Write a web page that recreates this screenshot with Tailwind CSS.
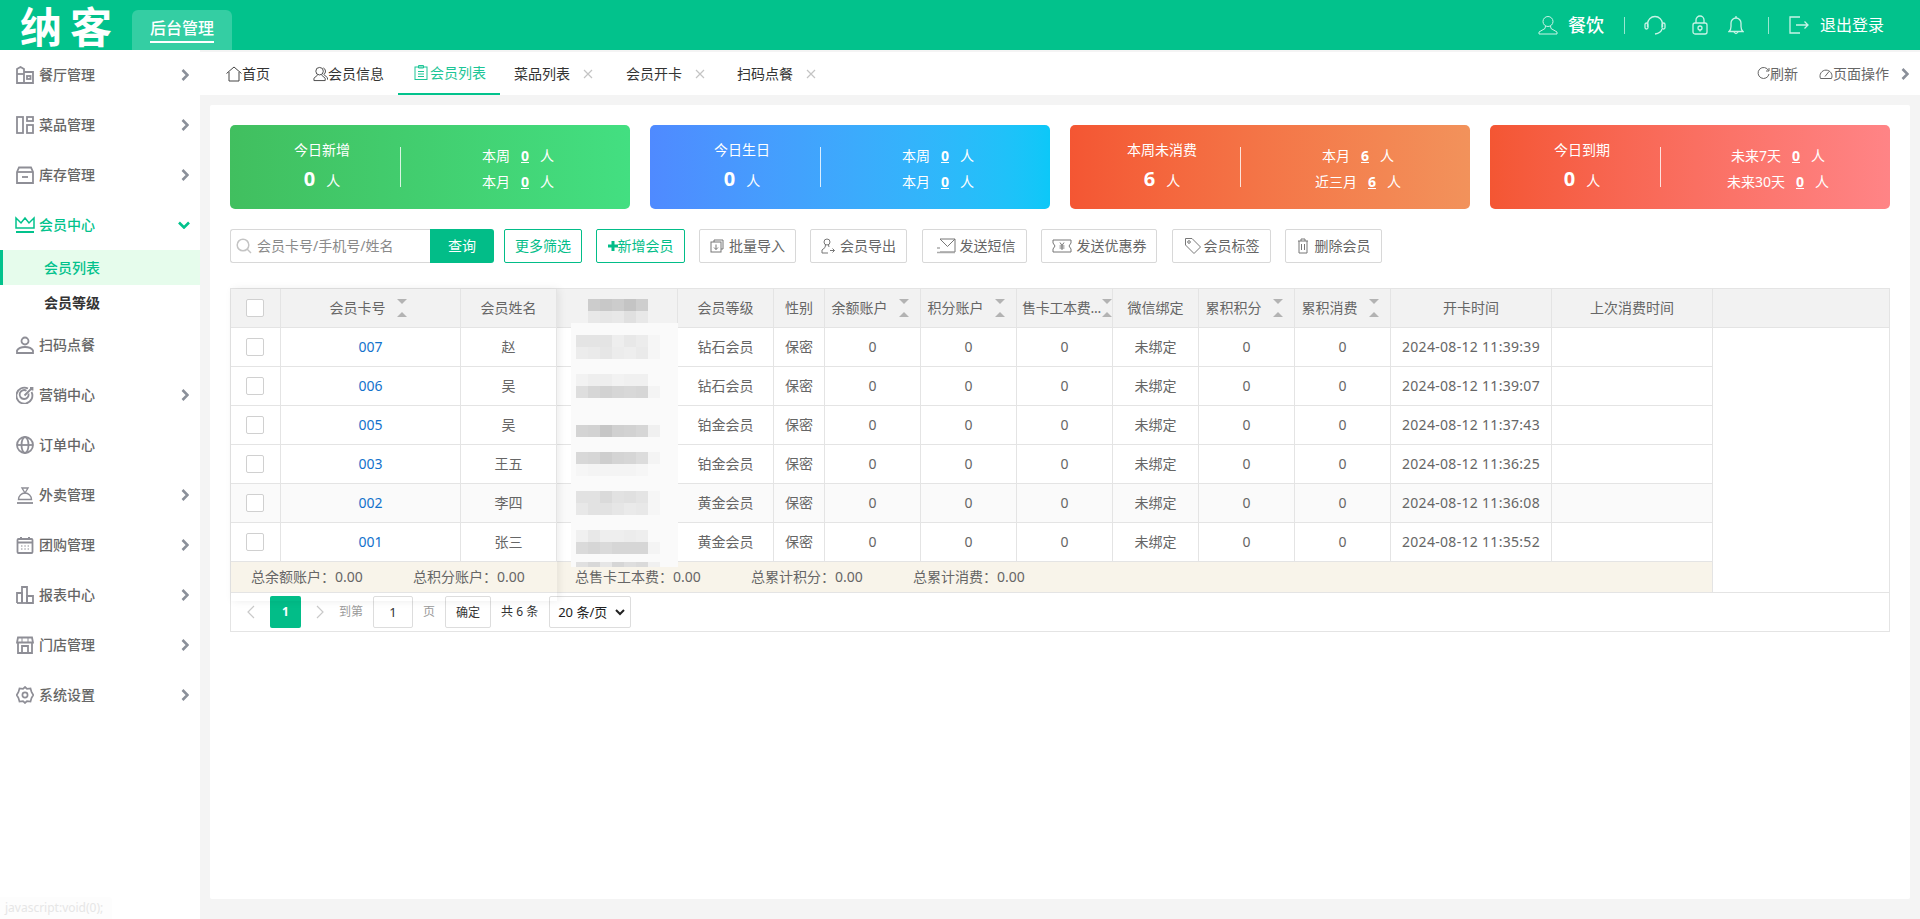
<!DOCTYPE html>
<html lang="en">
<head>
    <meta charset="UTF-8">
    <title>会员列表</title>
    <script src="https://cdn.jsdelivr.net/npm/@tailwindcss/browser@4"></script>
</head>
<body class="h-[919px] overflow-hidden bg-[#f4f4f4] text-[14px] leading-none text-[#666] [font-family:'Noto_Sans','Noto_Sans_CJK_SC',sans-serif]">

    <!-- Header -->
    <header class="h-[50px] bg-[#02c28c] flex items-end text-white">
        <div class="w-[132px] h-[50px] pl-[20px] flex items-center text-[42px] font-bold tracking-[8px] [font-family:'Noto_Sans_CJK_SC',sans-serif]">纳客</div>
        <div class="w-[100px] h-[40px] bg-white/20 rounded-t-[6px] flex justify-center">
            <span class="mt-[10px] h-[23px] border-b-2 border-white text-[16px] font-medium">后台管理</span>
        </div>
        <div class="ml-auto h-[50px] flex items-center pr-[36px]">
            <svg class="w-[20px] h-[20px] mr-[10px]" viewBox="0 0 20 20" fill="none" stroke="#c8f3e6" stroke-width="1"><circle cx="10" cy="6.5" r="5"/><path d="M7.5 11 L7 13.5 L1 17 V19 H19 V17 L13 13.5 L12.5 11"/></svg>
            <span class="text-[18px] font-medium">餐饮</span>
            <span class="w-px h-[17px] bg-white/60 ml-[20px] mr-[19px]"></span>
            <svg class="w-[22px] h-[20px] mr-[26px]" viewBox="0 0 22 20" fill="none" stroke="#c8f3e6" stroke-width="1.3"><path d="M3.5 12 V9 a7.5 7.5 0 0 1 15 0 V12"/><rect x="1" y="8" width="3" height="6" rx="1.5"/><rect x="18" y="8" width="3" height="6" rx="1.5"/><path d="M18 14 q-1 4 -7 5"/></svg>
            <svg class="w-[16px] h-[20px] mr-[20px]" viewBox="0 0 16 20" fill="none" stroke="#c8f3e6" stroke-width="1.3"><rect x="1" y="8" width="14" height="11" rx="2"/><path d="M4 8 V5 a4 4 0 0 1 8 0 V8"/><circle cx="8" cy="13" r="2"/><path d="M8 15 v1.5"/></svg>
            <svg class="w-[16px] h-[20px]" viewBox="0 0 16 20" fill="none" stroke="#c8f3e6" stroke-width="1.3"><path d="M1 16.5 q2 -1.5 2 -5 V8 a5 5 0 0 1 10 0 v3.5 q0 3.5 2 5 Z"/><path d="M8 3 V1"/><path d="M6 17 q2 3 4 0"/></svg>
            <span class="w-px h-[17px] bg-white/60 ml-[24px] mr-[20px]"></span>
            <svg class="w-[20px] h-[18px] mr-[11px]" viewBox="0 0 20 18" fill="none" stroke="#c8f3e6" stroke-width="1.3"><path d="M11 1 H1 V17 H11"/><path d="M7 9 H19 M15.5 5.5 L19 9 L15.5 12.5"/></svg>
            <span class="text-[16px]">退出登录</span>
        </div>
    </header>

    <div class="flex h-[869px]">
        <!-- Sidebar -->
        <aside id="sidebar" class="w-[200px] shrink-0 bg-white relative">
            <nav class="font-medium">
                <a class="h-[50px] flex items-center pl-[16px]"><svg class="w-[18px] h-[18px] mr-[5px]" viewBox="0 0 18 18" fill="none" stroke="#8e8e96" stroke-width="1.8"><path d="M1 17 V3 L4.5 1 L8 3 V17 Z"/><path d="M8 6 H17 V17 H8"/><path d="M1 8 H8"/><rect x="11" y="10" width="3.5" height="3"/></svg>餐厅管理<svg class="w-[8px] h-[12px] ml-auto mr-[11px]" viewBox="0 0 8 12" fill="none" stroke="#8a8f99" stroke-width="2.6"><path d="M1.5 1 L6.5 6 L1.5 11"/></svg></a>
                <a class="h-[50px] flex items-center pl-[16px]"><svg class="w-[18px] h-[18px] mr-[5px]" viewBox="0 0 18 18" fill="none" stroke="#8e8e96" stroke-width="1.8"><rect x="1" y="1" width="6" height="16"/><rect x="11" y="1" width="6" height="4"/><rect x="11" y="9" width="6" height="8"/></svg>菜品管理<svg class="w-[8px] h-[12px] ml-auto mr-[11px]" viewBox="0 0 8 12" fill="none" stroke="#8a8f99" stroke-width="2.6"><path d="M1.5 1 L6.5 6 L1.5 11"/></svg></a>
                <a class="h-[50px] flex items-center pl-[16px]"><svg class="w-[18px] h-[18px] mr-[5px]" viewBox="0 0 18 18" fill="none" stroke="#8e8e96" stroke-width="1.8"><path d="M1 6 L3 1.5 H15 L17 6 V17 H1 Z"/><path d="M1 6 H17"/><path d="M6 11 H12"/></svg>库存管理<svg class="w-[8px] h-[12px] ml-auto mr-[11px]" viewBox="0 0 8 12" fill="none" stroke="#8a8f99" stroke-width="2.6"><path d="M1.5 1 L6.5 6 L1.5 11"/></svg></a>
                <a class="h-[50px] flex items-center pl-[15px] text-[#02c28c]"><svg class="w-[20px] h-[18px] mr-[4px]" viewBox="0 0 20 18" fill="none" stroke="#02c28c" stroke-width="1.5"><path d="M1 12 V2 L6 7 L10 2 L14 7 L19 2 V12 Z"/><path d="M1 16 H19" stroke-width="2"/></svg>会员中心<svg class="w-[12px] h-[8px] ml-auto mr-[10px]" viewBox="0 0 12 8" fill="none" stroke="#02c28c" stroke-width="2.6"><path d="M1 1.5 L6 6.5 L11 1.5"/></svg></a>
                <a class="h-[35px] flex items-center pl-[41px] border-l-[3px] border-[#02c28c] bg-[#e6fcec] text-[#02c28c]">会员列表</a>
                <a class="h-[35px] flex items-center pl-[44px] text-[#333] font-bold">会员等级</a>
                <a class="h-[50px] flex items-center pl-[16px]"><svg class="w-[18px] h-[18px] mr-[5px]" viewBox="0 0 18 18" fill="none" stroke="#8e8e96" stroke-width="1.8"><circle cx="9" cy="5" r="3.5"/><path d="M1 17 V14.5 Q3 11 9 11 Q15 11 17 14.5 V17 Z"/></svg>扫码点餐</a>
                <a class="h-[50px] flex items-center pl-[16px]"><svg class="w-[18px] h-[18px] mr-[5px]" viewBox="0 0 18 18" fill="none" stroke="#8e8e96" stroke-width="1.8"><path d="M15.5 6 A8 8 0 1 1 12 2.5"/><path d="M12.5 7.5 A4.5 4.5 0 1 1 10.5 4.7"/><path d="M8.5 9.5 L16 2 M14 2 H16.5 V4.5"/></svg>营销中心<svg class="w-[8px] h-[12px] ml-auto mr-[11px]" viewBox="0 0 8 12" fill="none" stroke="#8a8f99" stroke-width="2.6"><path d="M1.5 1 L6.5 6 L1.5 11"/></svg></a>
                <a class="h-[50px] flex items-center pl-[16px]"><svg class="w-[18px] h-[18px] mr-[5px]" viewBox="0 0 18 18" fill="none" stroke="#8e8e96" stroke-width="1.8"><circle cx="9" cy="9" r="8"/><ellipse cx="9" cy="9" rx="3.5" ry="8"/><path d="M1 9 H17"/></svg>订单中心</a>
                <a class="h-[50px] flex items-center pl-[16px]"><svg class="w-[18px] h-[18px] mr-[5px]" viewBox="0 0 18 18" fill="none" stroke="#8e8e96" stroke-width="1.4"><path d="M2.5 13.5 A6.5 6.5 0 0 1 15.5 13.5 Z"/><path d="M6 2 H12 L9 7 Z"/><path d="M1 17 H17" stroke-width="1.8"/></svg>外卖管理<svg class="w-[8px] h-[12px] ml-auto mr-[11px]" viewBox="0 0 8 12" fill="none" stroke="#8a8f99" stroke-width="2.6"><path d="M1.5 1 L6.5 6 L1.5 11"/></svg></a>
                <a class="h-[50px] flex items-center pl-[16px]"><svg class="w-[18px] h-[18px] mr-[5px]" viewBox="0 0 18 18" fill="none" stroke="#8e8e96" stroke-width="1.8"><rect x="1.5" y="3" width="15" height="14" rx="1"/><path d="M1.5 6.5 H16.5" stroke-width="2"/><path d="M5 1 V4 M13 1 V4" stroke-width="2"/><path d="M5 10 H6.5 M8.3 10 H9.8 M11.6 10 H13 M5 13 H6.5 M8.3 13 H9.8 M11.6 13 H13" stroke-width="1.2"/></svg>团购管理<svg class="w-[8px] h-[12px] ml-auto mr-[11px]" viewBox="0 0 8 12" fill="none" stroke="#8a8f99" stroke-width="2.6"><path d="M1.5 1 L6.5 6 L1.5 11"/></svg></a>
                <a class="h-[50px] flex items-center pl-[16px]"><svg class="w-[18px] h-[18px] mr-[5px]" viewBox="0 0 18 18" fill="none" stroke="#8e8e96" stroke-width="1.8"><path d="M1 17 V7 H6 V17"/><path d="M6 17 V1 H11 V17"/><path d="M11 17 V10 H17 V17 Z"/><path d="M1 17 H17"/></svg>报表中心<svg class="w-[8px] h-[12px] ml-auto mr-[11px]" viewBox="0 0 8 12" fill="none" stroke="#8a8f99" stroke-width="2.6"><path d="M1.5 1 L6.5 6 L1.5 11"/></svg></a>
                <a class="h-[50px] flex items-center pl-[16px]"><svg class="w-[18px] h-[18px] mr-[5px]" viewBox="0 0 18 18" fill="none" stroke="#8e8e96" stroke-width="1.8"><path d="M2 1.5 H16 L17 6.5 H1 Z"/><path d="M2 6.5 V17 H16 V6.5"/><path d="M6 17 V10 H12 V17"/><path d="M6 2 V6 M12 2 V6" stroke-width="1"/></svg>门店管理<svg class="w-[8px] h-[12px] ml-auto mr-[11px]" viewBox="0 0 8 12" fill="none" stroke="#8a8f99" stroke-width="2.6"><path d="M1.5 1 L6.5 6 L1.5 11"/></svg></a>
                <a class="h-[50px] flex items-center pl-[16px]"><svg class="w-[18px] h-[18px] mr-[5px]" viewBox="0 0 18 18" fill="none" stroke="#8e8e96" stroke-width="1.7"><path d="M9 1 L11 2.8 L14.5 2.5 L15.5 6 L17.3 9 L15.5 12 L14.5 15.5 L11 15.2 L9 17 L7 15.2 L3.5 15.5 L2.5 12 L0.7 9 L2.5 6 L3.5 2.5 L7 2.8 Z"/><circle cx="9" cy="9" r="2.6"/></svg>系统设置<svg class="w-[8px] h-[12px] ml-auto mr-[11px]" viewBox="0 0 8 12" fill="none" stroke="#8a8f99" stroke-width="2.6"><path d="M1.5 1 L6.5 6 L1.5 11"/></svg></a>
            </nav>
            <!-- Link-hover status bubble -->
            <div class="absolute left-0 bottom-0 h-[22px] w-[112px] bg-[#fdfdfd] rounded-tr-[3px] pl-[5px] flex items-center text-[12px] text-[#e6e6e6]">javascript:void(0);</div>
        </aside>

        <!-- Main -->
        <main class="flex-1 min-w-0 flex flex-col">
            <!-- Tabs -->
            <div class="mt-[2px] h-[43px] bg-white flex items-stretch text-[#333]">
                <a class="w-[102px] flex items-center pl-[26px]"><svg class="w-[16px] h-[16px]" viewBox="0 0 16 16" fill="none" stroke="#444" stroke-width="1"><path d="M0.5 7.5 L8 1 L15.5 7.5"/><path d="M3 6 V15 H13 V6"/></svg>首页</a>
                <a class="w-[96px] flex items-center pl-[13px] -ml-[2px]"><svg class="w-[15px] h-[16px]" viewBox="0 0 16 16" fill="none" stroke="#444" stroke-width="1"><circle cx="7" cy="5" r="4"/><path d="M5 9 L1 12.5 V15 H13 V12.5 L9 9"/><path d="M11 1.5 A4 4 0 0 1 11.5 8.5 L15.5 12 V14"/></svg>会员信息</a>
                <a class="w-[102px] ml-[2px] flex items-center pl-[16px] border-b-2 border-[#02c28c] text-[#1cc596]"><svg class="w-[14px] h-[15px] mr-[2px]" viewBox="0 0 14 15" fill="none" stroke="#1cc596" stroke-width="1"><rect x="1" y="2" width="12" height="12.5"/><path d="M4.5 0.5 H9.5 V3 H4.5 Z"/><path d="M4 6.5 H10 M4 9 H10 M4 11.5 H10"/></svg>会员列表</a>
                <a class="ml-[14px] flex items-center">菜品列表<svg class="w-[10px] h-[10px] ml-[13px]" viewBox="0 0 10 10" stroke="#c4c4c4" stroke-width="1.2"><path d="M1 1 L9 9 M9 1 L1 9"/></svg></a>
                <a class="ml-[33px] flex items-center">会员开卡<svg class="w-[10px] h-[10px] ml-[13px]" viewBox="0 0 10 10" stroke="#c4c4c4" stroke-width="1.2"><path d="M1 1 L9 9 M9 1 L1 9"/></svg></a>
                <a class="ml-[32px] flex items-center">扫码点餐<svg class="w-[10px] h-[10px] ml-[13px]" viewBox="0 0 10 10" stroke="#c4c4c4" stroke-width="1.2"><path d="M1 1 L9 9 M9 1 L1 9"/></svg></a>
                <div class="ml-auto flex items-center text-[#666] pr-[11px]">
                    <svg class="w-[13px] h-[13px]" viewBox="0 0 13 13" fill="none" stroke="#666" stroke-width="1"><path d="M11.5 3.5 A5.5 5.5 0 1 0 12 7"/><path d="M12 1 V4 H9"/></svg>刷新
                    <svg class="w-[14px] h-[13px] ml-[21px]" viewBox="0 0 14 13" fill="none" stroke="#666" stroke-width="1"><path d="M1.5 11.5 A6 6 0 1 1 12.5 11.5 Z"/><path d="M6 9.5 L10 4.5"/></svg>页面操作
                    <svg class="w-[8px] h-[12px] ml-[12px]" viewBox="0 0 8 12" fill="none" stroke="#8a8f99" stroke-width="2.6"><path d="M1.5 1 L6.5 6 L1.5 11"/></svg>
                </div>
            </div>

            <!-- Content card -->
            <div class="mt-[10px] mx-[10px] h-[794px] bg-white rounded-[2px] px-[20px] pt-[20px]">
                <!-- Stats -->
                <div class="grid grid-cols-4 gap-[20px] h-[84px] text-white">
                    <div class="rounded-[5px] bg-gradient-to-r from-[#41bf5f] to-[#43df81] flex items-center">
                        <div class="w-[170px] text-center pl-[14px]"><p class="leading-[20px] mb-[6px]">今日新增</p><p class="leading-[26px]"><b class="text-[20px] font-bold mr-[11px]">0</b>人</p></div>
                        <span class="w-px h-[40px] bg-white/80"></span>
                        <div class="flex-1 text-center pl-[5px] pt-[3px]"><p class="leading-[26px]">本周<u class="mx-[11px] font-bold">0</u>人</p><p class="leading-[26px]">本月<u class="mx-[11px] font-bold">0</u>人</p></div>
                    </div>
                    <div class="rounded-[5px] bg-gradient-to-r from-[#4f8aff] to-[#0cc8f8] flex items-center">
                        <div class="w-[170px] text-center pl-[14px]"><p class="leading-[20px] mb-[6px]">今日生日</p><p class="leading-[26px]"><b class="text-[20px] font-bold mr-[11px]">0</b>人</p></div>
                        <span class="w-px h-[40px] bg-white/80"></span>
                        <div class="flex-1 text-center pl-[5px] pt-[3px]"><p class="leading-[26px]">本周<u class="mx-[11px] font-bold">0</u>人</p><p class="leading-[26px]">本月<u class="mx-[11px] font-bold">0</u>人</p></div>
                    </div>
                    <div class="rounded-[5px] bg-gradient-to-r from-[#f45633] to-[#f2925b] flex items-center">
                        <div class="w-[170px] text-center pl-[14px]"><p class="leading-[20px] mb-[6px]">本周未消费</p><p class="leading-[26px]"><b class="text-[20px] font-bold mr-[11px]">6</b>人</p></div>
                        <span class="w-px h-[40px] bg-white/80"></span>
                        <div class="flex-1 text-center pl-[5px] pt-[3px]"><p class="leading-[26px]">本月<u class="mx-[11px] font-bold">6</u>人</p><p class="leading-[26px]">近三月<u class="mx-[11px] font-bold">6</u>人</p></div>
                    </div>
                    <div class="rounded-[5px] bg-gradient-to-r from-[#f45633] to-[#ff8486] flex items-center">
                        <div class="w-[170px] text-center pl-[14px]"><p class="leading-[20px] mb-[6px]">今日到期</p><p class="leading-[26px]"><b class="text-[20px] font-bold mr-[11px]">0</b>人</p></div>
                        <span class="w-px h-[40px] bg-white/80"></span>
                        <div class="flex-1 text-center pl-[5px] pt-[3px]"><p class="leading-[26px]">未来7天<u class="mx-[11px] font-bold">0</u>人</p><p class="leading-[26px]">未来30天<u class="mx-[11px] font-bold">0</u>人</p></div>
                    </div>
                </div>

                <!-- Toolbar -->
                <div class="mt-[20px] h-[34px] flex items-stretch">
                    <div class="w-[200px] border border-[#d8d8d8] border-r-0 rounded-l-[3px] flex items-center pl-[5px] text-[#8a8a8a]">
                        <svg class="w-[16px] h-[16px] mr-[5px]" viewBox="0 0 16 16" fill="none" stroke="#c4c4c4" stroke-width="1.5"><circle cx="7" cy="7" r="5.8"/><path d="M11 11 L15 15"/></svg>会员卡号/手机号/姓名
                    </div>
                    <button class="w-[64px] bg-[#02bd88] text-white rounded-r-[3px]">查询</button>
                    <button class="ml-[10px] w-[78px] border border-[#02bd88] rounded-[2px] text-[#02bd88]">更多筛选</button>
                    <button class="ml-[14px] w-[89px] border border-[#02bd88] rounded-[2px] text-[#02bd88] flex items-center justify-center"><svg class="w-[10px] h-[10px]" viewBox="0 0 10 10" fill="#02bd88"><path d="M3.5 0 H6.5 V3.5 H10 V6.5 H6.5 V10 H3.5 V6.5 H0 V3.5 H3.5 Z"/></svg>新增会员</button>
                    <button class="ml-[14px] w-[97px] border border-[#d8d8d8] rounded-[2px] flex items-center justify-center"><svg class="w-[14px] h-[14px] mr-[5px]" viewBox="0 0 14 14" fill="none" stroke="#777" stroke-width="1"><path d="M4 3 V1 H13 V10 H11"/><rect x="1" y="3" width="10" height="10"/><path d="M6 5.5 V10.5 M4 8.5 L6 10.5 L8 8.5"/></svg>批量导入</button>
                    <button class="ml-[14px] w-[97px] border border-[#d8d8d8] rounded-[2px] flex items-center justify-center"><svg class="w-[14px] h-[16px] mr-[5px]" viewBox="0 0 14 16" fill="none" stroke="#777" stroke-width="1"><circle cx="6" cy="4" r="3"/><path d="M4.5 7 L4 9.5 L1 12 V15 H7"/><path d="M7.5 7 L8 9"/><path d="M9 12.5 H13.5 M11.5 10.5 L13.5 12.5 L11.5 14.5"/></svg>会员导出</button>
                    <button class="ml-[15px] w-[105px] border border-[#d8d8d8] rounded-[2px] flex items-center justify-center pl-[2px]"><svg class="w-[20px] h-[16px] mr-[4px]" viewBox="0 0 20 16" fill="none" stroke="#777" stroke-width="1"><path d="M4 1 H19 V14 H4"/><path d="M4 1 L11.5 8.5 L19 1"/><path d="M1 10 H4 M1 14.5 H19" stroke-width="1.5" stroke="#aaa"/></svg>发送短信</button>
                    <button class="ml-[14px] w-[116px] border border-[#d8d8d8] rounded-[2px] flex items-center justify-center"><svg class="w-[20px] h-[14px] mr-[5px]" viewBox="0 0 20 14" fill="none" stroke="#777" stroke-width="1"><path d="M1 1 H19 V4 L17 7 L19 10 V13 H1 V10 L3 7 L1 4 Z"/><path d="M8 3.5 L10 6.5 L12 3.5 M7.5 7 H12.5 M7.5 9 H12.5 M10 6.5 V11"/></svg>发送优惠券</button>
                    <button class="ml-[15px] w-[99px] border border-[#d8d8d8] rounded-[2px] flex items-center justify-center"><svg class="w-[18px] h-[18px] mr-[2px]" viewBox="0 0 18 18" fill="none" stroke="#777" stroke-width="1"><path d="M1.5 1.5 H8 L16.5 10 L10 16.5 L1.5 8 Z"/><circle cx="5" cy="5" r="1.3"/></svg>会员标签</button>
                    <button class="ml-[14px] w-[97px] border border-[#d8d8d8] rounded-[2px] flex items-center justify-center"><svg class="w-[12px] h-[16px] mr-[6px]" viewBox="0 0 12 16" fill="none" stroke="#777" stroke-width="1"><path d="M1 3 H11 M4 3 V1 H8 V3"/><path d="M2 3 V15 H10 V3"/><path d="M4.5 6 V12 M7.5 6 V12"/></svg>删除会员</button>
                </div>

                <!-- Table -->
                <div class="mt-[25px] relative border border-[#e4e4e4] w-[1660px]">
                    <div id="table-head" class="h-[39px] bg-[#f2f2f2] border-b border-[#e4e4e4] flex"></div>
                    <div id="table-body"></div>
                    <div class="relative w-[1482px] h-[31px] bg-[#f8f4ea] border-b border-r border-[#e4e4e4] flex items-center pl-[20px]">
                        <span class="w-[162px]">总余额账户：0.00</span>
                        <span class="w-[162px]">总积分账户：0.00</span>
                        <span class="w-[176px]">总售卡工本费：0.00</span>
                        <span class="w-[162px]">总累计积分：0.00</span>
                        <span>总累计消费：0.00</span>
                    </div>
                    <!-- Pagination -->
                    <div class="h-[39px] flex items-center pl-[16px] text-[12px] -mt-px border-t border-[#e4e4e4]">
                        <svg class="w-[8px] h-[14px]" viewBox="0 0 8 14" fill="none" stroke="#c9c9c9" stroke-width="1.2"><path d="M7 1 L1 7 L7 13"/></svg>
                        <span class="ml-[15px] w-[31px] h-[32px] rounded-[2px] bg-[#02bd88] text-white font-bold flex items-center justify-center">1</span>
                        <svg class="ml-[15px] w-[8px] h-[14px]" viewBox="0 0 8 14" fill="none" stroke="#c9c9c9" stroke-width="1.2"><path d="M1 1 L7 7 L1 13"/></svg>
                        <span class="ml-[15px] text-[#9a9a9a]">到第</span>
                        <span class="ml-[10px] w-[40px] h-[32px] border border-[#ddd] rounded-[2px] flex items-center justify-center text-[#333] text-[13px]">1</span>
                        <span class="ml-[10px] text-[#9a9a9a]">页</span>
                        <span class="ml-[10px] w-[46px] h-[32px] border border-[#ddd] rounded-[2px] flex items-center justify-center text-[#333] pt-[2px]">确定</span>
                        <span class="ml-[10px] text-[#333]">共 6 条</span>
                        <span class="ml-[11px] w-[82px] h-[32px] border border-[#ddd] rounded-[2px] flex items-center pl-[8px] text-[#222] text-[13px]">20 条/页<svg class="ml-auto mr-[5px] w-[10px] h-[7px]" viewBox="0 0 10 7" fill="none" stroke="#222" stroke-width="2"><path d="M1 1 L5 5 L9 1"/></svg></span>
                    </div>
                    <!-- Shadow of the frozen left columns -->
                    <div class="absolute left-0 top-0 w-[326px] h-[312px] shadow-[2px_0_8px_rgba(0,0,0,0.08)] pointer-events-none"></div>
                    <div id="mosaic" class="absolute left-[340px] top-[34px] w-[107px] h-[244px] bg-[#fafafa]"></div>
                </div>
            </div>
        </main>
    </div>

    <script>
        // column widths read off the screenshot, text / sort flag per column
        const columns = [
            { w: 50, type: 'check' },
            { w: 180, title: '会员卡号', sort: true, key: 'no' },
            { w: 96, title: '会员姓名', key: 'name' },
            { w: 121, title: '', key: '' },
            { w: 96, title: '会员等级', key: 'level' },
            { w: 51, title: '性别', val: '保密' },
            { w: 96, title: '余额账户', sort: true, val: '0' },
            { w: 96, title: '积分账户', sort: true, val: '0' },
            { w: 96, title: '售卡工本费...', sort: true, val: '0', tight: true },
            { w: 86, title: '微信绑定', val: '未绑定' },
            { w: 96, title: '累积积分', sort: true, val: '0' },
            { w: 96, title: '累积消费', sort: true, val: '0' },
            { w: 161, title: '开卡时间', key: 'time' },
            { w: 161, title: '上次消费时间', val: '' },
        ];
        const rows = [
            { no: '007', name: '赵', level: '钻石会员', time: '2024-08-12 11:39:39' },
            { no: '006', name: '吴', level: '钻石会员', time: '2024-08-12 11:39:07' },
            { no: '005', name: '吴', level: '铂金会员', time: '2024-08-12 11:37:43' },
            { no: '003', name: '王五', level: '铂金会员', time: '2024-08-12 11:36:25' },
            { no: '002', name: '李四', level: '黄金会员', time: '2024-08-12 11:36:08', hover: true },
            { no: '001', name: '张三', level: '黄金会员', time: '2024-08-12 11:35:52' },
        ];

        const checkbox = '<span class="w-[18px] h-[18px] mr-[2px] bg-white border border-[#d0d0d0] rounded-[2px]"></span>';
        const sortIcon = '<svg class="w-[10px] h-[18px] ml-[11px] shrink-0" viewBox="0 0 10 18" fill="#b3b3b3"><path d="M0 0 H10 L5 5 Z"/><path d="M0 18 H10 L5 13 Z"/></svg>';
        const sortIconTight = '<svg class="w-[10px] h-[18px] ml-[1px] shrink-0" viewBox="0 0 10 18" fill="#b3b3b3"><path d="M0 0 H10 L5 5 Z"/><path d="M0 18 H10 L5 13 Z"/></svg>';

        // --- Table head ---
        document.getElementById('table-head').innerHTML = columns.map(c => {
            if (c.type === 'check') {
                return `<div class="h-full flex items-center justify-center border-r border-[#e4e4e4] shrink-0" style="width:${c.w}px">${checkbox}</div>`;
            }
            if (c.tight) {
                return `<div class="h-full flex items-center pl-[5px] border-r border-[#e4e4e4] shrink-0 whitespace-nowrap overflow-hidden tracking-[-0.3px]" style="width:${c.w}px">${c.title}${sortIconTight}</div>`;
            }
            if (c.sort) {
                return `<div class="h-full flex items-center justify-center pr-[5px] border-r border-[#e4e4e4] shrink-0 whitespace-nowrap" style="width:${c.w}px">${c.title}${sortIcon}</div>`;
            }
            return `<div class="h-full flex items-center justify-center border-r border-[#e4e4e4] shrink-0 whitespace-nowrap" style="width:${c.w}px">${c.title}</div>`;
        }).join('') + '<div class="flex-1"></div>';

        // --- Table rows ---
        document.getElementById('table-body').innerHTML = rows.map(r => {
            const cells = columns.map(c => {
                let inner = c.val !== undefined ? c.val : (c.key ? r[c.key] : '');
                if (c.type === 'check') inner = checkbox;
                let extra = '';
                if (c.key === 'no') extra = 'text-[#1372cc]';
                if (c.key === 'time') extra = 'tracking-[0.3px]';
                return `<div class="h-full flex items-center justify-center border-r border-[#e4e4e4] shrink-0 whitespace-nowrap ${extra}" style="width:${c.w}px">${inner}</div>`;
            }).join('');
            return `<div class="h-[39px] w-[1482px] flex border-b border-[#e4e4e4] ${r.hover ? 'bg-[#fafafa]' : 'bg-white'}">${cells}</div>`;
        }).join('');

        // --- Blurred phone-number column, drawn as grey mosaic cells ---
        const mosaicShades = [
            [[228,228,228,238,232,236,246],[236,234,230,236,238,234,246]],
            [[242,238,238,242,240,240,250],[222,214,210,214,216,214,244]],
            [[250,250,250,250,250,250,250],[212,210,198,208,210,214,240]],
            [[216,214,206,212,214,220,244],[246,244,244,244,244,246,250]],
            [[226,226,218,226,224,228,246],[232,226,226,230,234,232,246]],
            [[240,232,238,238,236,238,250],[218,214,218,214,214,214,244]],
        ];
        const cell = (x, y, g) => `<rect x="${x}" y="${y}" width="12" height="12" fill="rgb(${g},${g},${g})"/>`;
        let mosaicSvg = '';
        mosaicShades.forEach((block, row) => {
            block.forEach((line, li) => {
                line.forEach((g, ci) => { mosaicSvg += cell(5 + ci * 12, 12 + row * 39 + li * 12, g); });
            });
        });
        [224, 216, 230, 214, 222, 218, 240].forEach((g, ci) => { mosaicSvg += cell(5 + ci * 12, 239, g); });
        document.getElementById('mosaic').innerHTML = `<svg width="107" height="244">${mosaicSvg}</svg>`;
        // header mosaic sits above the light panel
        let headSvg = '';
        [[204,200,204,196,206],[232,230,232,224,232]].forEach((line, li) => {
            line.forEach((g, ci) => { headSvg += cell(ci * 12, li * 12, g); });
        });
        const head = document.createElement('div');
        head.className = 'absolute left-[357px] top-[10px] w-[60px] h-[24px]';
        head.innerHTML = `<svg width="60" height="24">${headSvg}</svg>`;
        document.getElementById('mosaic').parentElement.appendChild(head);
    </script>
</body>
</html>
